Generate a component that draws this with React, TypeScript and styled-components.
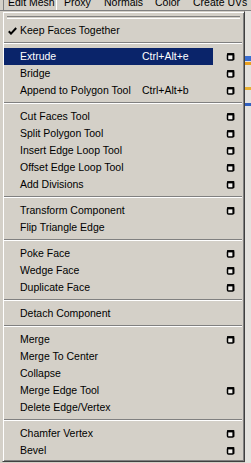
import React from 'react';
import styled, { createGlobalStyle } from 'styled-components';

const colors = {
  face: '#d4d0c8',
  shadow: '#808080',
  darkShadow: '#404040',
  highlight: '#ffffff',
  selection: '#0a246a',
  text: '#000000',
};

const GlobalStyle = createGlobalStyle`
  html, body {
    margin: 0;
    padding: 0;
    background: ${colors.face};
  }
  body {
    font-family: "Liberation Sans", Arial, sans-serif;
    font-size: 10.5px;
    color: ${colors.text};
  }
`;

const Screen = styled.div`
  position: relative;
  width: 251px;
  height: 463px;
  overflow: hidden;
  background: ${colors.face};
  display: flex;
  flex-direction: column;
`;

// the window menu bar, its labels are cut off at the top edge of the shot
const MenuBar = styled.div`
  display: flex;
  height: 10px;
  border-bottom: 1px solid ${colors.shadow};
  overflow: hidden;
  flex-shrink: 0;
`;

const MenuBarItem = styled.div<{ $pressed?: boolean; $width: number }>`
  width: ${({ $width }) => $width}px;
  flex-shrink: 0;
  padding-left: ${({ $pressed }) => ($pressed ? 4 : 7)}px;
  margin-left: ${({ $pressed }) => ($pressed ? 3 : 0)}px;
  box-sizing: border-box;
  line-height: 12px;
  margin-top: -4px;
  height: 14px;
  white-space: nowrap;
  border-right: ${({ $pressed }) => ($pressed ? `1px solid ${colors.highlight}` : 'none')};
  border-left: ${({ $pressed }) => ($pressed ? `1px solid ${colors.shadow}` : 'none')};
`;

const Workspace = styled.div`
  flex: 1;
  display: flex;
  justify-content: flex-end;
`;

const SidePanel = styled.div`
  width: 6px;
  background: #e4e2de;
  display: flex;
  flex-direction: column;
  padding-top: 32px;
`;

const PanelStripe = styled.div<{ $color: string; $h: number; $mt: number }>`
  height: ${({ $h }) => $h}px;
  margin-top: ${({ $mt }) => $mt}px;
  background: ${({ $color }) => $color};
`;

// dropdown lies over the workspace
const DropMenu = styled.div`
  position: absolute;
  left: 2px;
  top: 11px;
  width: 243px;
  box-sizing: border-box;
  background: ${colors.face};
  border-top: 1px solid ${colors.face};
  border-left: 1px solid ${colors.face};
  border-right: 1px solid ${colors.darkShadow};
  border-bottom: 1px solid ${colors.darkShadow};
  box-shadow: inset 1px 1px 0 ${colors.highlight}, inset -1px -1px 0 ${colors.shadow};
  padding: 1px 1px 2px 1px;
`;

const TearOff = styled.div`
  height: 9px;
  display: flex;
  align-items: center;
  padding: 0 3px;

  &::before {
    content: '';
    flex: 1;
    height: 1px;
    border-top: 1px solid ${colors.shadow};
    border-bottom: 1px solid ${colors.highlight};
    margin-top: -1px;
  }
`;

const Separator = styled.div`
  height: 9px;
  box-sizing: border-box;
  padding-top: 3px;

  &::before {
    content: '';
    display: block;
    margin-right: 1px;
    border-top: 1px solid ${colors.shadow};
    border-bottom: 1px solid ${colors.highlight};
  }
`;

const Row = styled.div`
  display: flex;
  height: 17px;
  line-height: 17px;
  white-space: nowrap;
`;

const Main = styled.div<{ $selected?: boolean }>`
  position: relative;
  width: 209px;
  display: flex;
  padding-left: 16px;
  box-sizing: border-box;
  background: ${({ $selected }) => ($selected ? colors.selection : 'transparent')};
  color: ${({ $selected }) => ($selected ? colors.highlight : colors.text)};
`;

const Label = styled.span`
  width: 122px;
  flex-shrink: 0;
`;

const Shortcut = styled.span`
  flex: 1;
`;

const CheckMark = styled.svg`
  position: absolute;
  left: 4px;
  top: 5px;
`;

const OptionCell = styled.div`
  width: 30px;
  display: flex;
  align-items: center;
  padding-left: 13px;
  box-sizing: border-box;
`;

type Item =
  | { kind: 'sep' }
  | { kind: 'item'; label: string; shortcut?: string; option?: boolean; checked?: boolean; selected?: boolean };

const items: Item[] = [
  { kind: 'item', label: 'Keep Faces Together', checked: true },
  { kind: 'sep' },
  { kind: 'item', label: 'Extrude', shortcut: 'Ctrl+Alt+e', option: true, selected: true },
  { kind: 'item', label: 'Bridge', option: true },
  { kind: 'item', label: 'Append to Polygon Tool', shortcut: 'Ctrl+Alt+b', option: true },
  { kind: 'sep' },
  { kind: 'item', label: 'Cut Faces Tool', option: true },
  { kind: 'item', label: 'Split Polygon Tool', option: true },
  { kind: 'item', label: 'Insert Edge Loop Tool', option: true },
  { kind: 'item', label: 'Offset Edge Loop Tool', option: true },
  { kind: 'item', label: 'Add Divisions', option: true },
  { kind: 'sep' },
  { kind: 'item', label: 'Transform Component', option: true },
  { kind: 'item', label: 'Flip Triangle Edge' },
  { kind: 'sep' },
  { kind: 'item', label: 'Poke Face', option: true },
  { kind: 'item', label: 'Wedge Face', option: true },
  { kind: 'item', label: 'Duplicate Face', option: true },
  { kind: 'sep' },
  { kind: 'item', label: 'Detach Component' },
  { kind: 'sep' },
  { kind: 'item', label: 'Merge', option: true },
  { kind: 'item', label: 'Merge To Center' },
  { kind: 'item', label: 'Collapse' },
  { kind: 'item', label: 'Merge Edge Tool', option: true },
  { kind: 'item', label: 'Delete Edge/Vertex' },
  { kind: 'sep' },
  { kind: 'item', label: 'Chamfer Vertex', option: true },
  { kind: 'item', label: 'Bevel', option: true },
];

// the little "options" box at the end of a row
const OptionBox = () => (
  <svg width="9" height="9" viewBox="0 0 9 9">
    <rect x="1.5" y="2" width="6" height="6" rx="1" fill="#f2f0ec" stroke="#000" strokeWidth="1.5" />
    <path d="M1 1.2 H7.8 V3.4 H1 Z" fill="#000" />
    <path d="M7.4 1.2 V8" stroke="#000" strokeWidth="1.8" />
  </svg>
);

const App: React.FC = () => {
  return (
    <>
      <GlobalStyle />
      <Screen>
        <MenuBar>
          <MenuBarItem $pressed $width={54}>Edit Mesh</MenuBarItem>
          <MenuBarItem $width={40}>Proxy</MenuBarItem>
          <MenuBarItem $width={51}>Normals</MenuBarItem>
          <MenuBarItem $width={38}>Color</MenuBarItem>
          <MenuBarItem $width={70}>Create UVs</MenuBarItem>
        </MenuBar>
        <Workspace>
          <SidePanel>
            <PanelStripe $color="#3a6ed0" $h={5} $mt={13} />
            <PanelStripe $color="#e8a020" $h={3} $mt={1} />
            <PanelStripe $color="#e8b030" $h={3} $mt={22} />
            <PanelStripe $color="#3060c0" $h={3} $mt={13} />
          </SidePanel>
        </Workspace>

        <DropMenu>
          <TearOff />
          {items.map((item, i) =>
            item.kind === 'sep' ? (
              <Separator key={i} />
            ) : (
              <Row key={i}>
                <Main $selected={item.selected}>
                  {item.checked && (
                    <CheckMark width="9" height="8" viewBox="0 0 9 8">
                      <path d="M0.8 4.2 L3 6.6 L8.2 1" fill="none" stroke="#000" strokeWidth="2" />
                    </CheckMark>
                  )}
                  <Label>{item.label}</Label>
                  {item.shortcut && <Shortcut>{item.shortcut}</Shortcut>}
                </Main>
                <OptionCell>{item.option && <OptionBox />}</OptionCell>
              </Row>
            )
          )}
        </DropMenu>
      </Screen>
    </>
  );
};

export default App;
